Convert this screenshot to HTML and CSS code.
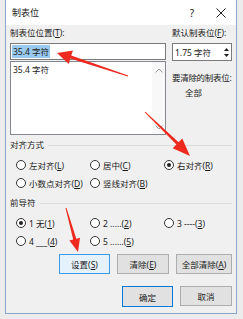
FILE: index.html
```html
<!DOCTYPE html>
<html lang="zh-CN">
<head>
  <meta charset="utf-8" />
  <title>制表位</title>
  <link rel="stylesheet" href="styles.css">
</head>
<body>
  <div class="screen">
    <div class="dialog">
      <!-- TITULO -->
      <div class="titlebar">
        <span class="title">制表位</span>
        <span class="help">?</span>
        <svg class="close" width="10" height="10" viewBox="0 0 10 10">
          <path d="M0.5 0.5 L9.5 9.5 M9.5 0.5 L0.5 9.5" stroke="#222" stroke-width="1" fill="none"/>
        </svg>
      </div>

      <div class="body">
        <div class="top">
          <!-- columna izquierda -->
          <div class="col-left">
            <div class="label">制表位位置(<u>T</u>):</div>
            <div class="input"><span class="sel">35.4 字符</span></div>
            <div class="list">
              <div class="item">35.4 字符</div>
              <div class="scroll">
                <svg width="8" height="5" viewBox="0 0 8 5"><path d="M0.5 4.5 L4 1 L7.5 4.5" stroke="#a0a0a0" fill="none"/></svg>
                <svg width="8" height="5" viewBox="0 0 8 5"><path d="M0.5 0.5 L4 4 L7.5 0.5" stroke="#a0a0a0" fill="none"/></svg>
              </div>
            </div>
          </div>

          <!-- columna derecha -->
          <div class="col-right">
            <div class="label">默认制表位(<u>F</u>):</div>
            <div class="spin">
              <span>1.75 字符</span>
              <div class="spin-btns">
                <svg width="5" height="3" viewBox="0 0 5 3"><path d="M0 3 L2.5 0 L5 3 Z" fill="#222"/></svg>
                <svg width="5" height="3" viewBox="0 0 5 3"><path d="M0 0 L2.5 3 L5 0 Z" fill="#222"/></svg>
              </div>
            </div>
            <div class="label clear-label">要清除的制表位:</div>
            <div class="clear-val">全部</div>
          </div>
        </div>

        <!-- ALINEACION -->
        <div class="group-head"><span>对齐方式</span></div>
        <div class="radios">
          <div class="radio"><i></i><span>左对齐(<u>L</u>)</span></div>
          <div class="radio"><i></i><span>居中(<u>C</u>)</span></div>
          <div class="radio on"><i></i><span>右对齐(<u>R</u>)</span></div>
          <div class="radio"><i></i><span>小数点对齐(<u>D</u>)</span></div>
          <div class="radio"><i></i><span>竖线对齐(<u>B</u>)</span></div>
        </div>

        <!-- RELLENO -->
        <div class="group-head"><span>前导符</span></div>
        <div class="radios">
          <div class="radio on"><i></i><span>1 无(<u>1</u>)</span></div>
          <div class="radio"><i></i><span>2 .....(<u>2</u>)</span></div>
          <div class="radio"><i></i><span>3 ----(<u>3</u>)</span></div>
          <div class="radio"><i></i><span>4 ___(<u>4</u>)</span></div>
          <div class="radio"><i></i><span>5 ......(<u>5</u>)</span></div>
        </div>

        <!-- BOTONES -->
        <div class="btn-row">
          <div class="btn btn--focus"><span>设置(<u>S</u>)</span></div>
          <div class="btn"><span>清除(<u>E</u>)</span></div>
          <div class="btn btn--wide"><span>全部清除(<u>A</u>)</span></div>
        </div>
        <div class="btn-row btn-row--last">
          <div class="btn btn--default">确定</div>
          <div class="btn">取消</div>
        </div>
      </div>
    </div>

    <!-- flechas rojas encima -->
    <svg class="arrows" width="243" height="319" viewBox="0 0 243 319">
      <polygon fill="#ee2a1f" points="57,53 73,50.5 71.2,55.6 128.2,75.5 127.8,76.5 70.2,58.5 68.8,64"/>
      <polygon fill="#ee2a1f" points="190,156 182.3,138.6 178.6,142.3 145.35,111.65 144.65,112.35 176.4,144.5 172.7,148.3"/>
      <polygon fill="#ee2a1f" points="78,252 80,237.8 76.3,238.8 66.5,207.9 65.5,208.1 73.2,239.6 69.4,240.6"/>
    </svg>
  </div>
</body>
</html>
```

FILE: styles.css
```css
/* ===== base ===== */
*, *::before, *::after {
  margin: 0;
  padding: 0;
  box-sizing: border-box;
}

body {
  width: 243px;
  height: 319px;
  background: #ececec;
  font-family: "Noto Sans", "Noto Sans CJK SC", sans-serif;
  font-size: 8.5px;
  color: #1a1a1a;
  overflow: hidden;
}

u { text-decoration: underline; text-underline-offset: 1px; }

.screen {
  position: relative;
  width: 243px;
  height: 319px;
  padding-left: 5px;
}

/* ===== ventana ===== */
.dialog {
  width: 232px;
  height: 314px;
  background: #f0f0f0;
  border: 1px solid #8aa6c8;
  border-top: 0;
  display: flex;
  flex-direction: column;
}

.titlebar {
  height: 25px;
  background: #fff;
  display: flex;
  align-items: center;
  padding-left: 6px;
}
.title { font-size: 9px; flex: 1; }
.help { font-size: 10px; margin-right: 22px; }
.close { margin-right: 10px; }

.body {
  padding: 0 4px;
  display: flex;
  flex-direction: column;
}

.label { line-height: 12px; white-space: nowrap; }

.top {
  display: flex;
  gap: 6px;
  margin-top: 2px;
}

.col-left { width: 156px; display: flex; flex-direction: column; }
.col-right { width: 60px; display: flex; flex-direction: column; }

.input {
  margin-top: 4px;
  height: 17px;
  background: #fff;
  border: 1px solid #7a7a7a;
  padding: 1px 1px;
  display: flex;
  align-items: center;
}
.sel {
  background: #99c9ef;
  line-height: 13px;
  padding: 0 1px;
}

.list {
  height: 74px;
  background: #fff;
  border: 1px solid #828790;
  display: flex;
  margin-top: 1px;
}
.item { flex: 1; padding: 2px 2px; line-height: 12px; }
.scroll {
  width: 13px;
  background: #f8f8f8;
  display: flex;
  flex-direction: column;
  justify-content: space-between;
  align-items: center;
  padding: 6px 0 4px;
}

.spin {
  margin-top: 4px;
  height: 18px;
  background: #fff;
  border: 1px solid #7a7a7a;
  display: flex;
  align-items: center;
  padding-left: 2px;
}
.spin span { flex: 1; }
.spin-btns {
  width: 10px;
  height: 100%;
  display: flex;
  flex-direction: column;
  justify-content: space-around;
  align-items: center;
  padding: 2px 0;
}

.clear-label { margin-top: 11px; letter-spacing: -0.3px; }
.clear-val { margin-top: 3px; margin-left: 13px; line-height: 12px; }

/* ===== grupos ===== */
.group-head {
  margin-top: 4px;
  display: flex;
  align-items: center;
  gap: 4px;
  line-height: 12px;
}
.group-head::after {
  content: '';
  flex: 1;
  height: 1px;
  background: #dcdcdc;
}

.radios {
  display: grid;
  grid-template-columns: 74px 74px 74px;
  grid-auto-rows: 18px;
  padding-left: 6px;
  margin: 5px 0 1px;
}
.radio {
  display: flex;
  align-items: center;
  gap: 3px;
  white-space: nowrap;
}
.radio i {
  width: 10px;
  height: 10px;
  border-radius: 50%;
  border: 1px solid #333;
  background: #fff;
  display: flex;
  align-items: center;
  justify-content: center;
}
.radio.on i::after {
  content: '';
  width: 4px;
  height: 4px;
  border-radius: 50%;
  background: #222;
}

/* ===== botones ===== */
.btn-row {
  display: flex;
  justify-content: flex-end;
  gap: 7px;
  margin-top: 3px;
}
.btn-row--last { margin-top: 12px; }
.btn {
  width: 52px;
  height: 20px;
  background: #e1e1e1;
  border: 1px solid #adadad;
  display: flex;
  align-items: center;
  justify-content: center;
  white-space: nowrap;
}
.btn--wide { width: 56px; }
.btn--focus { width: 51px; background: #e5f1fb; border-color: #3c9ae6; }
.btn--default { width: 51px; height: 21px; border: 1.5px solid #0078d7; }

/* ===== flechas ===== */
.arrows {
  position: absolute;
  left: 0;
  top: 0;
  pointer-events: none;
}
```
